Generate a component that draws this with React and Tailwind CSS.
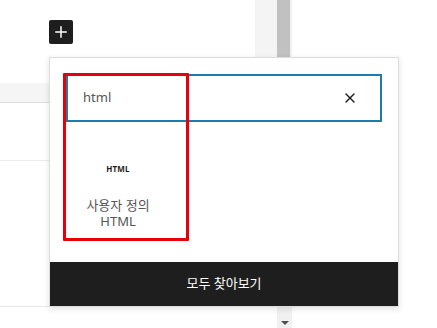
import { X, Plus } from "lucide-react";

const font = { fontFamily: '"Noto Sans", "Noto Sans CJK KR", sans-serif' };

export default function App() {
  return (
    <div
      className="relative w-[437px] h-[328px] overflow-hidden bg-white font-['Noto_Sans','Noto_Sans_CJK_KR',sans-serif]"
    >
      {/* editor background */}
      <div className="absolute left-0 top-[83px] w-[49px] h-[20px] bg-[#f5f5f5] border-b border-[#dcdcdc]" />
      <div className="absolute left-0 top-[160px] w-[49px] h-px bg-[#ececec]" />
      <div className="absolute left-0 top-[306px] w-[240px] h-px bg-[#e6e6e6]" />
      <div className="absolute left-[255px] top-0 w-[22px] h-[57px] bg-[#f4f4f4]" />
      <div className="absolute left-[277px] top-0 w-[15px] h-[328px] bg-[#f1f1f1] flex flex-col justify-between">
        <div className="w-[13px] h-[60px] bg-[#c1c1c1]" />
        <div className="h-[22px] flex items-end justify-center pb-[3px]">
          <div className="w-0 h-0 border-l-[4px] border-r-[4px] border-t-[4px] border-l-transparent border-r-transparent border-t-[#505050]" />
        </div>
      </div>

      {/* inserter toggle */}
      <div className="absolute left-[49px] top-[20px] w-[24px] h-[24px] rounded-[2px] bg-[#1e1e1e] flex items-center justify-center">
        <Plus size={18} strokeWidth={2} color="#fff" />
      </div>

      {/* popover */}
      <div className="absolute left-[49px] top-[57px] w-[350px] h-[250px] bg-white border border-[#dddddd] shadow-[0_2px_6px_rgba(0,0,0,0.12)] flex flex-col">
        <div className="flex-1 px-[16px] pt-[16px]">
          <div className="h-[48px] border-2 border-[#1e7bab] flex items-center pl-[15px] pr-[22px]">
            <span className="flex-1 text-[13px] text-[#555]" style={font}>html</span>
            <X size={16} strokeWidth={2} color="#1e1e1e" />
          </div>
          <div className="w-[104px] flex flex-col items-center pt-[41px]">
            <span className="text-[8px] font-bold text-[#1e1e1e] tracking-[0.2px]" style={font}>HTML</span>
            <div className="mt-[22px] text-[13px] leading-[16px] text-[#555] text-center" style={font}>
              사용자 정의
              <br />
              HTML
            </div>
          </div>
        </div>
        <div className="h-[44px] bg-[#1e1e1e] flex items-center justify-center text-white text-[13px]" style={font}>
          모두 찾아보기
        </div>
      </div>

      {/* annotation */}
      <div className="absolute left-[63px] top-[73px] w-[126px] h-[168px] border-[3px] border-[#e5000a] rounded-[1px]" />
    </div>
  );
}
